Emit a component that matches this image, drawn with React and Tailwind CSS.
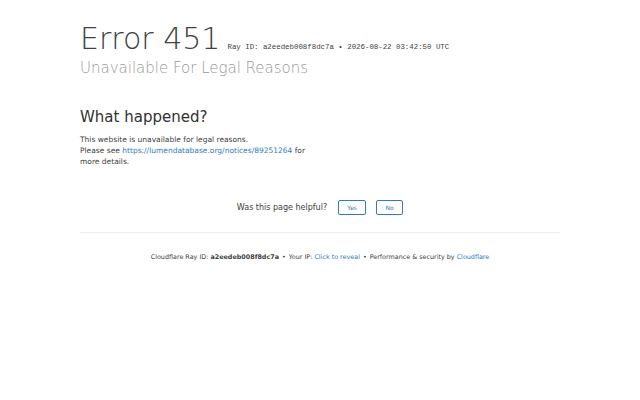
export default function App() {
  return (
    <div className="w-[640px] h-[400px] bg-white text-[#404040] font-['DejaVu_Sans',sans-serif]">
      <div className="w-[480px] mx-auto pt-[20px]">
        {/* Header */}
        <header>
          <h1 className="flex items-baseline">
            <span className="text-[30px] leading-[38px] font-light text-[#404040]">Error 451</span>
            <span className="ml-[7px] font-['Liberation_Mono',monospace] text-[7.4px] text-[#404040]">
              Ray ID: a2eedeb008f8dc7a &bull; 2026-08-22 03:42:50 UTC
            </span>
          </h1>
          <h2 className="mt-[1px] text-[15px] leading-[19px] font-light text-[#999999]">
            Unavailable For Legal Reasons
          </h2>
        </header>

        {/* What happened */}
        <section className="mt-[30px] w-[240px] pr-[8px]">
          <h2 className="text-[15px] leading-[19px] text-[#313131] mb-[7px]">What happened?</h2>
          <p className="text-[7.5px] leading-[11px] text-[#404040]">
            This website is unavailable for legal reasons.
            <br />
            Please see{' '}
            <a href="#" className="text-[#2f7bbf]">
              https://lumendatabase.org/notices/89251264
            </a>{' '}
            for more details.
          </p>
        </section>

        {/* Feedback */}
        <div className="mt-[33px] flex items-center justify-center gap-[10px]">
          <span className="text-[8px] text-[#404040] mr-[1px]">Was this page helpful?</span>
          <button className="w-[28px] h-[15px] border border-[#2f7bbf] rounded-[2px] text-[6px] text-[#2f7bbf]">
            Yes
          </button>
          <button className="w-[27px] h-[15px] border border-[#2f7bbf] rounded-[2px] text-[6px] text-[#2f7bbf]">
            No
          </button>
        </div>

        <div className="mt-[17px] border-t border-[#ededed]"></div>

        {/* Footer */}
        <p className="mt-[20px] text-center text-[6.4px] text-[#404040]">
          Cloudflare Ray ID: <strong className="font-bold">a2eedeb008f8dc7a</strong>
          <span className="mx-[3px]">&bull;</span>
          Your IP: <span className="text-[#2f7bbf]">Click to reveal</span>
          <span className="mx-[3px]">&bull;</span>
          Performance &amp; security by <span className="text-[#2f7bbf]">Cloudflare</span>
        </p>
      </div>
    </div>
  );
}
